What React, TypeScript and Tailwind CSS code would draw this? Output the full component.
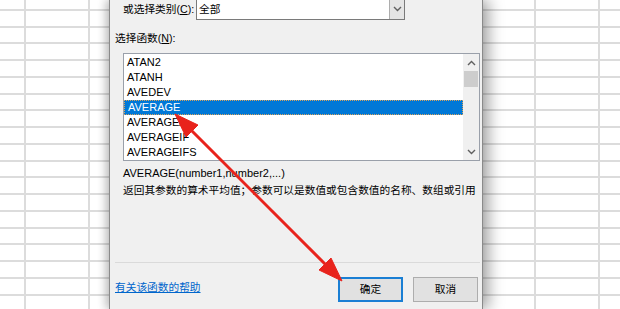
import React from 'react'

const rows = Array.from({ length: 20 })

const Sheet = ({ cols }: { cols: string[] }) => {
  return (
    <div className="flex h-full overflow-hidden bg-white">
      {cols.map((w, i) => (
        <div key={i} className={`${w} shrink-0 border-r-2 border-[#dcdcdc] -mt-[6px]`}>
          {rows.map((_, j) => (
            <div key={j} className="h-[16.75px] border-b-2 border-[#dcdcdc]" />
          ))}
        </div>
      ))}
    </div>
  )
}

const items = ['ATAN2', 'ATANH', 'AVEDEV', 'AVERAGE', 'AVERAGEA', 'AVERAGEIF', 'AVERAGEIFS']

const Chevron = ({ up }: { up?: boolean }) => (
  <svg width="9" height="6" viewBox="0 0 9 6" className={up ? '' : 'rotate-180'}>
    <path d="M1 5 L4.5 1.5 L8 5" fill="none" stroke="#606060" strokeWidth="1.4" />
  </svg>
)

const App = () => {
  return (
    <div
      className="relative flex h-[309px] w-[620px] overflow-hidden whitespace-nowrap bg-white text-[11px] text-black"
      style={{ fontFamily: '"Liberation Sans", "Noto Sans CJK SC", sans-serif' }}
    >
      <div className="w-[109px] shrink-0">
        <Sheet cols={['w-[26px]', 'w-[64px]', 'w-[30px]']} />
      </div>

      <div className="relative z-10 flex w-[374px] shrink-0 flex-col border-x border-[#8a8a8a] bg-[#f0f0f0] pl-[5px] pr-[3px] shadow-[6px_0_14px_rgba(0,0,0,0.35),-4px_0_8px_rgba(0,0,0,0.18)]">
        <div className="-mt-[2px] flex h-[22px] items-center pl-[8px]">
          <span className="w-[73px] shrink-0 text-[10.7px]">
            或选择类别(<span className="underline">C</span>):
          </span>
          <div className="flex h-full w-[209px] shrink-0 items-center border border-[#7a7a7a] bg-white">
            <span className="flex-1 pl-[2px] text-[10.7px]">全部</span>
            <div className="flex h-full w-[15px] items-center justify-center border-l border-[#adadad] bg-[#e5e5e5]">
              <Chevron />
            </div>
          </div>
        </div>

        <div className="mt-[10px] flex h-[16px] items-center text-[10.7px]">
          选择函数(<span className="underline">N</span>):
        </div>

        <div className="mt-[7px] ml-[8px] flex h-[108px] w-[357px] border border-[#9aa0aa] bg-white">
          <div className="flex flex-1 flex-col pt-[1px]">
            {items.map((it) => (
              <div
                key={it}
                className={`flex h-[15px] items-center pl-[3px] ${
                  it === 'AVERAGE' ? 'border border-dotted border-[#d9a35c] bg-[#0078d7] text-white' : ''
                }`}
              >
                {it}
              </div>
            ))}
          </div>
          <div className="flex w-[16px] flex-col items-center bg-[#f0f0f0]">
            <div className="flex h-[17px] items-center">
              <Chevron up />
            </div>
            <div className="h-[16px] w-[14px] bg-[#cdcdcd]" />
            <div className="flex-1" />
            <div className="flex h-[17px] items-center">
              <Chevron />
            </div>
          </div>
        </div>

        <div className="mt-[4px] ml-[8px] flex h-[16px] items-center">AVERAGE(number1,number2,...)</div>
        <div className="mt-[1px] ml-[8px] flex h-[16px] items-center text-[10.7px]">
          返回其参数的算术平均值；参数可以是数值或包含数值的名称、数组或引用
        </div>

        <div className="mt-[64px] h-px w-[365px] bg-[#dadada]" />

        <div className="mt-[14px] flex h-[25px] items-center justify-between pr-[1px] text-[10.7px]">
          <span className="mb-[5px] text-[#0066cc] underline">有关该函数的帮助</span>
          <div className="flex gap-[10px]">
            <button className="flex h-[25px] w-[65px] items-center justify-center border-2 border-[#1a7fd4] bg-[#e1e1e1]">
              确定
            </button>
            <button className="flex h-[25px] w-[65px] items-center justify-center border border-[#adadad] bg-[#e1e1e1]">
              取消
            </button>
          </div>
        </div>
      </div>

      <div className="flex-1">
        <Sheet cols={['w-[53px]', 'w-[64px]', 'w-[40px]']} />
      </div>

      <svg className="pointer-events-none absolute inset-0 z-20" width="620" height="309" viewBox="0 0 620 309">
        <g fill="#e8231c" stroke="#e8231c" strokeLinejoin="round">
          <line x1="188" y1="127" x2="329" y2="268" strokeWidth="3" />
          <polygon points="175,114 198,125 186,137" strokeWidth="1" />
          <polygon points="342,281 319,270 331,258" strokeWidth="1" />
        </g>
      </svg>
    </div>
  )
}

export default App
